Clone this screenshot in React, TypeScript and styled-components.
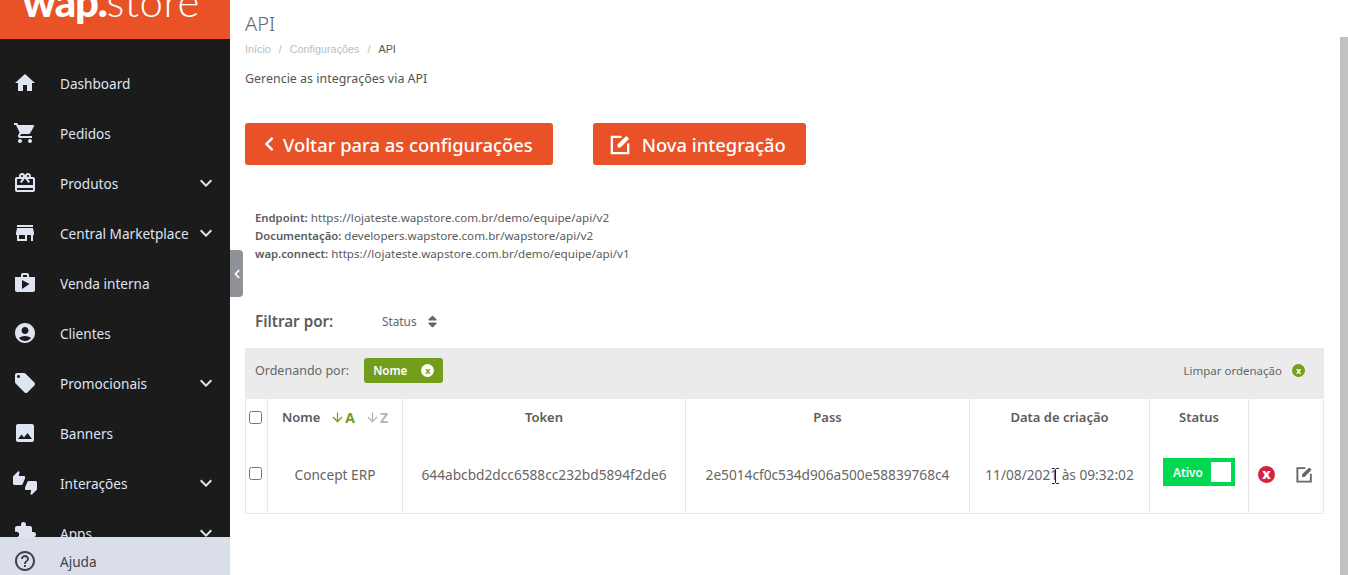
import styled, { createGlobalStyle } from 'styled-components'
import type { ComponentType } from 'react'
import {
  MdAccountCircle,
  MdArrowDownward,
  MdExpandMore,
  MdExtension,
  MdHelpOutline,
  MdHome,
  MdImage,
  MdLocalOffer,
  MdRedeem,
  MdShop,
  MdShoppingCart,
  MdStore,
  MdThumbsUpDown,
} from 'react-icons/md'
import { FaChevronLeft, FaSort } from 'react-icons/fa'

const colors = {
  orange: '#e95227',
  dark: '#1b1b1b',
  navText: '#dfe4f2',
  help: '#d9deea',
  text: '#5c5c5c',
  border: '#e8e8e8',
  green: '#739e1c',
}

const GlobalStyle = createGlobalStyle`
  html, body {
    margin: 0;
    height: 100%;
    overflow: hidden;
    background: #fff;
  }
  body {
    font-family: "Noto Sans", "Open Sans", sans-serif;
    color: ${colors.text};
  }
`

const Page = styled.div`
  display: flex;
  width: 1348px;
  height: 575px;
  overflow: hidden;
  position: relative;
`

const Sidebar = styled.aside`
  position: relative;
  width: 230px;
  flex: none;
  height: 575px;
  background: ${colors.dark};
  overflow: hidden;
`

const LogoBar = styled.div`
  display: flex;
  justify-content: center;
  align-items: flex-end;
  height: 39px;
  background: ${colors.orange};
  overflow: hidden;
  color: #fff;
  padding-right: 8px;
  box-sizing: border-box;
`

const LogoText = styled.div`
  font-family: "Lato", sans-serif;
  font-size: 42px;
  line-height: 42px;
  font-weight: 900;
  letter-spacing: -1.2px;
  margin-bottom: 17px;
  white-space: nowrap;

  span {
    font-weight: 300;
    letter-spacing: 0.4px;
  }
`

const NavList = styled.nav`
  padding-top: 20px;
  margin-top: -1px;
`

const NavItem = styled.div`
  display: flex;
  align-items: center;
  height: 50px;
  padding: 0 15px;
  color: ${colors.navText};
  font-size: 13.6px;
`

const NavIcon = styled.span`
  display: flex;
  width: 45px;
  flex: none;
  font-size: 24px;
  margin-left: -2px;
  margin-right: 2px;
`

const NavLabel = styled.span`
  flex: 1;
  white-space: nowrap;
`

const NavChevron = styled(MdExpandMore)`
  font-size: 24px;
  flex: none;
  margin-right: -3px;
`

const HelpBar = styled.div`
  position: absolute;
  left: 0;
  right: 0;
  bottom: 0;
  height: 38px;
  display: flex;
  align-items: center;
  padding: 10px 15px 0;
  box-sizing: border-box;
  background: ${colors.help};
  color: #3f4246;
  font-size: 13.6px;
`

const CollapseHandle = styled.div`
  position: absolute;
  left: 230px;
  top: 250px;
  width: 13px;
  height: 47px;
  display: flex;
  align-items: center;
  justify-content: center;
  background: #8f9296;
  border-radius: 0 4px 4px 0;
  color: #fff;
  font-size: 10px;
`

const ScrollThumb = styled.div`
  position: absolute;
  right: 0;
  top: 37px;
  bottom: 0;
  width: 8px;
  background: #c1c1c1;
`

const Main = styled.main`
  flex: 1;
  padding: 10px 24px 0 15px;
  min-width: 0;
`

const Title = styled.h1`
  margin: 0;
  font-size: 20px;
  line-height: 28px;
  font-weight: 300;
  color: #666;
`

const Breadcrumb = styled.div`
  display: flex;
  gap: 8px;
  margin-top: 4px;
  font-family: "Liberation Sans", sans-serif;
  font-size: 10.8px;
  line-height: 14px;
  color: #bdbdbd;

  b {
    font-weight: 400;
    color: #555;
  }
`

const Lead = styled.p`
  margin: 15px 0 0;
  font-size: 12.45px;
  line-height: 16px;
  color: #555;
`

const ButtonRow = styled.div`
  display: flex;
  gap: 40px;
  margin-top: 36px;
`

const ActionButton = styled.button<{ $gap: number }>`
  display: flex;
  align-items: center;
  gap: ${(props) => props.$gap}px;
  height: 42px;
  padding: 0 20px 0 16px;
  border: none;
  border-radius: 3px;
  background: ${colors.orange};
  color: #fff;
  font-family: inherit;
  font-size: 18.38px;
  font-weight: 500;
  white-space: nowrap;

  svg {
    flex: none;
  }
`

const InfoBlock = styled.div`
  margin: 44px 0 0 10px;
  font-size: 11.65px;
  line-height: 18px;
  color: #5c5c5c;

  b {
    font-size: 11.3px;
    font-weight: 600;
  }
`

const FilterRow = styled.div`
  display: flex;
  align-items: center;
  margin: 46px 0 0 10px;
  height: 24px;
`

const FilterLabel = styled.span`
  width: 127px;
  font-size: 15.2px;
  font-weight: 600;
  color: #5c5c5c;
`

const FilterOption = styled.span`
  display: flex;
  align-items: center;
  gap: 8px;
  font-size: 11.8px;
  color: #666;
`

const SortBar = styled.div`
  display: flex;
  align-items: center;
  justify-content: space-between;
  box-sizing: border-box;
  height: 51px;
  margin-top: 15px;
  padding: 0 19px 6px 10px;
  background: #ebebeb;
  font-size: 12.5px;
  color: #666;
`

const SortGroup = styled.div`
  display: flex;
  align-items: center;
`

const Chip = styled.span`
  display: flex;
  align-items: center;
  gap: 14px;
  height: 25px;
  margin-left: 15px;
  padding: 0 9px;
  border-radius: 3px;
  background: ${colors.green};
  color: #fff;
  font-size: 11.6px;
  font-weight: 600;
`

const ClearDot = styled.span<{ $inverted?: boolean }>`
  display: flex;
  align-items: center;
  justify-content: center;
  width: 13px;
  height: 13px;
  border-radius: 50%;
  background: ${(props) => (props.$inverted ? '#fff' : colors.green)};
  color: ${(props) => (props.$inverted ? colors.green : '#fff')};
  font-size: 9px;
  line-height: 1;
  font-weight: 700;
`

const ClearText = styled.span`
  margin-right: 10px;
  font-size: 11.5px;
`

const Table = styled.table`
  width: 1078px;
  border-collapse: collapse;
  table-layout: fixed;
  border: 1px solid ${colors.border};
  border-top: none;
`

const Th = styled.th<{ $width: number }>`
  width: ${(props) => props.$width}px;
  height: 36px;
  padding: 0;
  border-left: 1px solid ${colors.border};
  font-size: 13px;
  font-weight: 600;
  color: #5c5c5c;
  text-align: center;
  box-sizing: border-box;
`

const Td = styled.td`
  position: relative;
  box-sizing: border-box;
  height: 78px;
  padding: 2px 0 0;
  border-left: 1px solid ${colors.border};
  font-size: 13.7px;
  color: #666;
  text-align: center;
  white-space: nowrap;
`

const Check = styled.input.attrs({ type: 'checkbox' })<{ $lift?: number }>`
  display: block;
  margin: 0 0 ${(props) => props.$lift || 0}px 3px;
`

const SortHead = styled.span`
  display: flex;
  align-items: center;
  justify-content: center;
  gap: 10px;
`

const SortArrow = styled.span<{ $active?: boolean }>`
  display: flex;
  align-items: center;
  font-weight: 700;
  font-size: 14px;
  color: ${(props) => (props.$active ? colors.green : '#b5b5b5')};
`

const Toggle = styled.span`
  display: inline-flex;
  align-items: center;
  justify-content: space-between;
  box-sizing: border-box;
  width: 72px;
  height: 28px;
  margin-bottom: 5px;
  padding: 4px 4px 4px 10px;
  background: #00d850;
  color: #fff;
  font-size: 11.8px;
  font-weight: 600;
  vertical-align: middle;

  i {
    display: block;
    width: 20px;
    height: 20px;
    background: #fff;
  }
`

const RowActions = styled.span`
  display: flex;
  align-items: center;
  justify-content: space-between;
  padding: 0 9px;
  color: #666;
`

const RemoveDot = styled.span`
  display: flex;
  align-items: center;
  justify-content: center;
  width: 17px;
  height: 17px;
  border-radius: 50%;
  background: #d9203c;
  color: #fff;
  font-size: 14px;
  line-height: 1;
  font-weight: 800;
  padding-bottom: 2px;
  box-sizing: border-box;
`

const TextCursor = styled.svg`
  position: absolute;
  left: 82px;
  top: 33px;
`

const EditIcon = ({ size, color }: { size: number; color: string }) => (
  <svg width={size} height={size} viewBox="0 0 24 24" fill="none">
    <path d="M13 4H3v17h17V11" stroke={color} strokeWidth="2.4" />
    <path d="M9 15v-3.2L18 3l3 3-9 9z" fill={color} />
  </svg>
)

interface NavEntry {
  label: string
  icon: ComponentType
  sub?: boolean
}

const navEntries: NavEntry[] = [
  { label: 'Dashboard', icon: MdHome },
  { label: 'Pedidos', icon: MdShoppingCart },
  { label: 'Produtos', icon: MdRedeem, sub: true },
  { label: 'Central Marketplace', icon: MdStore, sub: true },
  { label: 'Venda interna', icon: MdShop },
  { label: 'Clientes', icon: MdAccountCircle },
  { label: 'Promocionais', icon: MdLocalOffer, sub: true },
  { label: 'Banners', icon: MdImage },
  { label: 'Interações', icon: MdThumbsUpDown, sub: true },
  { label: 'Apps', icon: MdExtension, sub: true },
]

const App = () => {
  return (
    <Page>
      <GlobalStyle />
      <Sidebar>
        <LogoBar>
          <LogoText>
            wap.<span>store</span>
          </LogoText>
        </LogoBar>
        <NavList>
          {navEntries.map(({ label, icon: Icon, sub }) => (
            <NavItem key={label}>
              <NavIcon>
                <Icon />
              </NavIcon>
              <NavLabel>{label}</NavLabel>
              {sub && <NavChevron />}
            </NavItem>
          ))}
        </NavList>
        <HelpBar>
          <NavIcon>
            <MdHelpOutline />
          </NavIcon>
          <NavLabel>Ajuda</NavLabel>
        </HelpBar>
      </Sidebar>
      <CollapseHandle>
        <FaChevronLeft />
      </CollapseHandle>

      <Main>
        <Title>API</Title>
        <Breadcrumb>
          <span>Início</span>
          <span>/</span>
          <span>Configurações</span>
          <span>/</span>
          <b>API</b>
        </Breadcrumb>
        <Lead>Gerencie as integrações via API</Lead>

        <ButtonRow>
          <ActionButton $gap={6}>
            <FaChevronLeft size={16} />
            Voltar para as configurações
          </ActionButton>
          <ActionButton $gap={10}>
            <EditIcon size={23} color="#fff" />
            Nova integração
          </ActionButton>
        </ButtonRow>

        <InfoBlock>
          <div>
            <b>Endpoint:</b> https://lojateste.wapstore.com.br/demo/equipe/api/v2
          </div>
          <div>
            <b>Documentação:</b> developers.wapstore.com.br/wapstore/api/v2
          </div>
          <div>
            <b>wap.connect:</b> https://lojateste.wapstore.com.br/demo/equipe/api/v1
          </div>
        </InfoBlock>

        <FilterRow>
          <FilterLabel>Filtrar por:</FilterLabel>
          <FilterOption>
            Status <FaSort size={15} />
          </FilterOption>
        </FilterRow>

        <SortBar>
          <SortGroup>
            Ordenando por:
            <Chip>
              Nome <ClearDot $inverted>x</ClearDot>
            </Chip>
          </SortGroup>
          <SortGroup>
            <ClearText>Limpar ordenação</ClearText>
            <ClearDot>x</ClearDot>
          </SortGroup>
        </SortBar>

        <Table>
          <thead>
            <tr>
              <Th $width={22}>
                <Check />
              </Th>
              <Th $width={135}>
                <SortHead>
                  Nome
                  <SortArrow $active>
                    <MdArrowDownward size={15} />A
                  </SortArrow>
                  <SortArrow>
                    <MdArrowDownward size={15} />Z
                  </SortArrow>
                </SortHead>
              </Th>
              <Th $width={283}>Token</Th>
              <Th $width={284}>Pass</Th>
              <Th $width={180}>Data de criação</Th>
              <Th $width={99}>Status</Th>
              <Th $width={75} />
            </tr>
          </thead>
          <tbody>
            <tr>
              <Td>
                <Check $lift={3} />
              </Td>
              <Td>Concept ERP</Td>
              <Td>644abcbd2dcc6588cc232bd5894f2de6</Td>
              <Td>2e5014cf0c534d906a500e58839768c4</Td>
              <Td>
                11/08/2021 às 09:32:02
                <TextCursor width="7" height="16" viewBox="0 0 7 16">
                  <path d="M0 .5h2.5L3.5 1.5 4.5.5H7M3.5 1.5v13M0 15.5h2.5l1-1 1 1H7" stroke="#1b1b2b" fill="none" />
                </TextCursor>
              </Td>
              <Td>
                <Toggle>
                  Ativo
                  <i />
                </Toggle>
              </Td>
              <Td>
                <RowActions>
                  <RemoveDot>x</RemoveDot>
                  <EditIcon size={19} color="#666" />
                </RowActions>
              </Td>
            </tr>
          </tbody>
        </Table>
      </Main>
      <ScrollThumb />
    </Page>
  )
}

export default App
